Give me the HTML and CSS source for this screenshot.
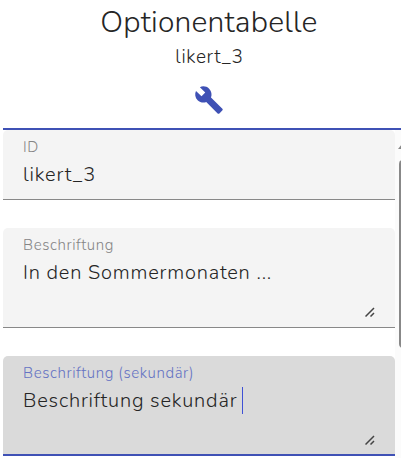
FILE: index.html
```html
<!DOCTYPE html>
<html lang="de">
<head>
<meta charset="utf-8">
<title>Optionentabelle</title>
<link rel="stylesheet" href="styles.css">
</head>
<body>
<header class="header">
  <h1 class="title"><span>Optionentabelle</span></h1>
  <p class="subtitle"><span>likert_3</span></p>
  <svg class="wrench" viewBox="0 0 24 24"><path d="M22.7 19l-9.1-9.1c.9-2.3.4-5-1.5-6.9-2-2-5-2.4-7.4-1.3L9 6 6 9 1.6 4.7C.4 7.1.9 10.1 2.9 12.1c1.9 1.9 4.6 2.4 6.9 1.5l9.1 9.1c.4.4 1 .4 1.4 0l2.3-2.3c.5-.4.5-1.1.1-1.4z"/></svg>
</header>
<main class="content">
  <div class="fields">
    <div class="field field-short">
      <div class="label">ID</div>
      <div class="value value-id">likert_3</div>
    </div>
    <div class="field">
      <div class="label">Beschriftung</div>
      <div class="value">In den Sommermonaten ...</div>
      <svg class="grip" viewBox="0 0 10 10"><path d="M.5 9.5L9 1M5.5 9.5L9 6"/></svg>
    </div>
    <div class="field focused">
      <div class="label">Beschriftung (sekundär)</div>
      <div class="value">Beschriftung sekundär<i class="caret"></i></div>
      <svg class="grip" viewBox="0 0 10 10"><path d="M.5 9.5L9 1M5.5 9.5L9 6"/></svg>
    </div>
  </div>
  <div class="scrollbar"><div class="arrow"></div><div class="thumb"></div></div>
</main>
</body>
</html>
```
FILE: styles.css
```css
* { box-sizing: border-box; }
body {
  margin: 0;
  height: 458px;
  overflow: hidden;
  background: #fff;
  color: #252525;
  font-family: Nunito, Lato, sans-serif;
  font-weight: 300;
}
.header {
  height: 130px;
  margin-left: 3px;
  padding-top: 4px;
  display: flex;
  flex-direction: column;
  align-items: center;
  border-bottom: 2px solid #3f51b5;
}
.title {
  margin: 0 0 0 14px;
  font-size: 30px;
  font-weight: 300;
  line-height: 38px;
  letter-spacing: 0.22px;
  white-space: nowrap;
}
.subtitle {
  margin: 3px 0 0 15px;
  font-size: 19px;
  line-height: 24px;
  letter-spacing: 0.65px;
}
.wrench {
  width: 30px;
  height: 30px;
  margin: 16px 0 0 13px;
  fill: #3f51b5;
}
.content { display: flex; height: 328px; padding-left: 3px; }
.fields { width: 392px; display: flex; flex-direction: column; gap: 28px; }
.field {
  position: relative;
  height: 100px;
  flex: none;
  padding: 7px 20px 0;
  background: #f4f4f4;
  border-radius: 5px 5px 0 0;
  border-bottom: 1px solid #888;
}
.field-short { height: 70px; }
.label { height: 20px; font-size: 15px; line-height: 20px; letter-spacing: 0.6px; color: #858585; white-space: nowrap; }
.value { display: flex; height: 36px; font-size: 20px; line-height: 36px; letter-spacing: 0.8px; white-space: nowrap; }
.value-id { letter-spacing: 0.85px; }
.focused { background: #dadada; border-bottom: 2px solid #3f51b5; }
.focused .label { color: #6573c3; }
.caret { width: 1px; height: 27px; margin: 4px 0 0 5px; background: #3f51d5; }
.grip { position: absolute; right: 20px; bottom: 10px; width: 10px; height: 10px; fill: none; stroke: #444; stroke-width: 1.5; }
.focused .grip { bottom: 9px; }
.scrollbar { flex: 1; background: #fbfbfb; padding-top: 14px; overflow: hidden; }
.arrow { width: 8px; height: 5px; margin-left: 3px; background: #888; clip-path: polygon(0 100%, 50% 0, 100% 100%); }
.thumb { width: 8px; height: 188px; margin: 11px 0 0 4px; border-radius: 4px; background: #888; }
```
